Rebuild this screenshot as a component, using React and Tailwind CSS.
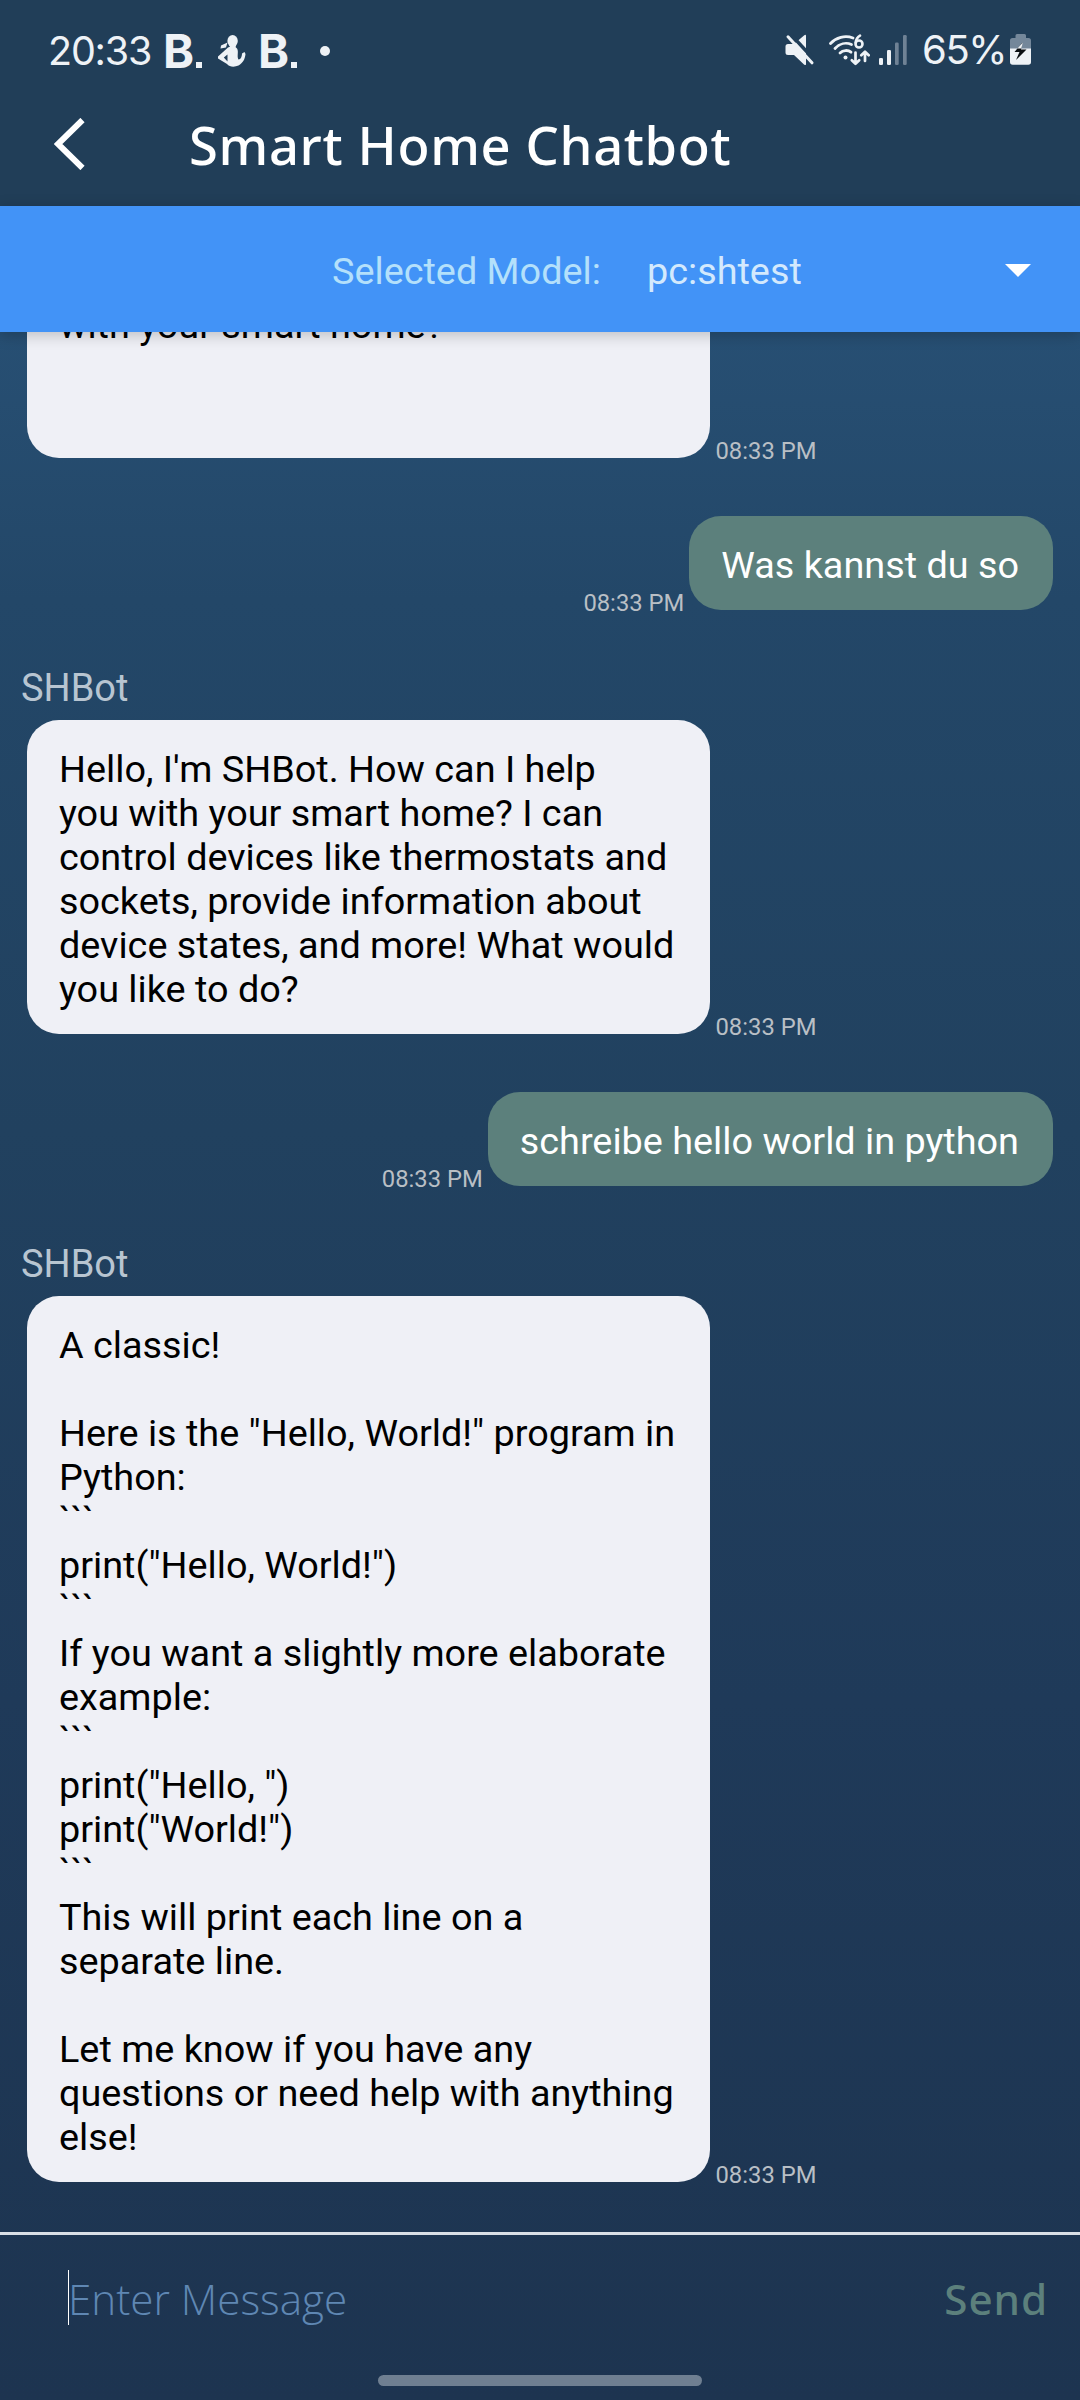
import React from "react";

const MESSAGES = [
  { from: "bot", continued: true, time: "08:33 PM", text: "with your smart home?\n\n\u00a0" },
  { from: "user", time: "08:33 PM", text: "Was kannst du so" },
  {
    from: "bot",
    time: "08:33 PM",
    text: "Hello, I'm SHBot. How can I help\nyou with your smart home? I can\ncontrol devices like thermostats and\nsockets, provide information about\ndevice states, and more! What would\nyou like to do?",
  },
  { from: "user", time: "08:33 PM", text: "schreibe hello world in python" },
  {
    from: "bot",
    time: "08:33 PM",
    text: 'A classic!\n\nHere is the "Hello, World!" program in\nPython:\n```\nprint("Hello, World!")\n```\nIf you want a slightly more elaborate\nexample:\n```\nprint("Hello, ")\nprint("World!")\n```\nThis will print each line on a\nseparate line.\n\nLet me know if you have any\nquestions or need help with anything\nelse!',
  },
];

function BoldB() {
  return (
    <span className="flex w-[36px] items-end justify-between">
      <span className="-ml-[3px] -mt-px mb-px w-[29px] font-['Inter'] text-[47px] font-bold leading-[35px] tracking-[-1px]">B</span>
      <span className="mb-px size-[6px] shrink-0 bg-[#eef2f6]" />
    </span>
  );
}

function FigureIcon() {
  return (
    <svg className="h-[32px] w-[28px]" viewBox="0 0 28 32" fill="#eef2f6">
      <ellipse cx="14.6" cy="6" rx="5.2" ry="6" />
      <path d="M12 10h6l-.5 3-6 .5z" />
      <path d="M9.5 7.5 3 10.5 2.5 13.5 8 12.5z" />
      <path d="M10 12.5c3-1.5 7-1.2 9 1 2 3-.5 8 1.5 11 2.5 0 3.500-3.500 3.500-6l2.500-1.500 1 2c-.5 5-2.500 9-7 11.500-4 1.800-9 1.600-11.500-1.500L0 23.500v-2z" />
      <path d="M9.500 19.500 5.800 22.500 9.500 26.500z" fill="#213e58" />
    </svg>
  );
}

function MuteIcon() {
  return (
    <svg className="h-[31px] w-[30px]" viewBox="0 0 30 31">
      <path d="M3 10h6l10-8.500q2-1.500 2 .5v28q0 2-2 .5L9 21H3q-2.500 0-2.500-2.500v-6Q.5 10 3 10z" fill="#eef2f6" />
      <path d="M5.500 0 29.500 26" stroke="#213e58" strokeWidth="3.500" />
      <path d="M3 2.800 27 28.800" stroke="#eef2f6" strokeWidth="3" strokeLinecap="round" />
    </svg>
  );
}

function WifiIcon() {
  return (
    <svg className="h-[32px] w-[41px]" viewBox="0 0 41 32" fill="none" stroke="#eef2f6" strokeLinecap="round">
      <g strokeWidth="2.800">
        <path d="M1.500 9.500C7 3.500 16 1 24 4" />
        <path d="M6 14.500C10.500 9.500 17 8.200 22.500 10.500" />
        <path d="M11 19c3-3 8-3.300 11-.8" />
      </g>
      <circle cx="16.500" cy="23.500" r="2" fill="#eef2f6" stroke="none" />
      <g strokeWidth="2.600">
        <circle cx="30" cy="10" r="3.500" />
        <path d="M26.700 8.500C27 5.500 28.500 3 31 1.600" />
      </g>
      <g strokeWidth="2.700" strokeLinejoin="round">
        <path d="M26.500 18.500V29.500M22.800 26.200l3.700 3.600 3.700-3.600" />
        <path d="M36 27V18M32.300 21.200l3.700-3.600 3.700 3.600" />
      </g>
    </svg>
  );
}

function SignalIcon() {
  return (
    <svg className="h-[30px] w-[28px]" viewBox="0 0 28 30">
      <rect x="0" y="23" width="4" height="7" rx="1.300" fill="#eef2f6" />
      <rect x="8" y="15" width="4" height="15" rx="1.300" fill="#eef2f6" />
      <rect x="16" y="7.500" width="3.700" height="22.500" rx="1.300" fill="#6f8295" />
      <rect x="24" y="0" width="3.700" height="30" rx="1.300" fill="#6f8295" />
    </svg>
  );
}

function BatteryIcon() {
  return (
    <svg className="h-[31px] w-[21px]" viewBox="0 0 21 31">
      <path d="M5.500 1.500Q5.500 0 7 0h7.500Q16 0 16 1.500V4h2.500Q21 4 21 6.500V15H0V6.500Q0 4 2.500 4h3z" fill="#74879a" />
      <path d="M0 14.500h21V28q0 2.700-2.700 2.700H2.700Q0 30.700 0 28z" fill="#eef2f6" />
      <path d="M12.500 8.500 4.500 18h5l-3.500 8L16.500 15.500H11z" fill="#0b0f13" />
      <path d="M12.800 8.500 7.300 14.500h4z" fill="#eef2f6" />
    </svg>
  );
}

function StatusBar() {
  return (
    <div className="flex h-[100px] justify-between pl-[48px] pr-[49px] pt-[33px] text-[#eef2f6]">
      <div className="flex h-[36px] items-center">
        <span className="w-[118px] font-['Inter'] text-[39.5px] font-normal leading-[36px] tracking-[-1.2px]">20:33</span>
        <BoldB />
        <span className="ml-[16px] mr-[15px] flex"><FigureIcon /></span>
        <BoldB />
        <span className="ml-[23px] size-[10px] rounded-full bg-[#eef2f6]" />
      </div>
      <div className="flex h-[33px] items-center">
        <MuteIcon />
        <span className="ml-[14px] flex"><WifiIcon /></span>
        <span className="ml-[9px] flex"><SignalIcon /></span>
        <span className="ml-[15px] w-[88px] whitespace-nowrap font-['Inter'] text-[40px] font-normal leading-[36px] tracking-[-1.4px]">65%</span>
        <BatteryIcon />
      </div>
    </div>
  );
}

function Header() {
  return (
    <header className="h-[206px] shrink-0 bg-[#213e58]">
      <StatusBar />
      <div className="flex items-start pl-[54px] pt-[9px]">
        <svg className="mt-[9px] h-[52px] w-[31px]" viewBox="0 0 31 52" fill="none" stroke="#fff" strokeWidth="6">
          <path d="M28.500 2 4 26 28.500 50" />
        </svg>
        <h1 className="ml-[104px] font-['Noto_Sans'] text-[52.500px] font-medium leading-[72px] tracking-[0.65px] text-white">
          Smart Home Chatbot
        </h1>
      </div>
    </header>
  );
}

function ModelBar() {
  return (
    <div className="relative z-10 flex h-[126px] shrink-0 items-center bg-[#4293f7] pl-[332px] pr-[49px] pt-[4px] leading-[44px] shadow-[0_3px_14px_rgba(0,0,0,0.22)]">
      <span className="w-[315px] text-[#b4e0fb]">Selected Model:</span>
      <span className="grow text-[#d3e9fd]">pc:shtest</span>
      <svg className="-mt-[2px] h-[13px] w-[26px]" viewBox="0 0 26 13">
        <path d="M0 0h26L13 13z" fill="#fff" />
      </svg>
    </div>
  );
}

function Message({ from, text, time, continued }) {
  if (from === "user") {
    return (
      <div className="mt-[58px] flex shrink-0 items-end justify-end pr-[27px]">
        <time className="-mb-[7px] mr-[5px] text-[23.800px] leading-[28px] text-[#b9bfc5]">{time}</time>
        <div className="rounded-[32px] bg-[#5c807c] pb-[23px] pl-[32px] pr-[34px] pt-[27px] text-white">{text}</div>
      </div>
    );
  }
  return (
    <div className="mt-[56px] flex shrink-0 flex-col gap-[10px]">
      {!continued && <div className="pl-[21px] text-[38px] text-[#b8c5d1]">SHBot</div>}
      <div className="flex items-end pl-[27px]">
        <div className="w-[683px] whitespace-pre rounded-[32px] bg-[#eff0f6] pb-[23px] pl-[32px] pt-[27px] text-black">
          {text}
        </div>
        <time className="-mb-[7px] ml-[5.500px] text-[23.800px] leading-[28px] text-[#b9bfc5]">{time}</time>
      </div>
    </div>
  );
}

function Composer() {
  return (
    <footer className="flex h-[168px] shrink-0 flex-col items-center border-t-[3px] border-[#d9dfe6]">
      <div className="flex h-[140px] w-full items-start justify-between pl-[68px] pr-[32px] pt-[35px]">
        <div className="flex h-[55px] border-l border-white font-['Open_Sans'] text-[42.200px] font-light leading-[55px] text-[#5f87b3]">
          <span className="-ml-px pt-px">Enter Message</span>
        </div>
        <button className="pt-px font-['Noto_Sans'] text-[42.200px] font-medium leading-[55px] tracking-[0.9px] text-[#5c807c]">
          Send
        </button>
      </div>
      <div className="h-[11px] w-[324px] rounded-full bg-[#6f7f91]" />
    </footer>
  );
}

export default function App() {
  return (
    <div className="flex h-[2400px] w-[1080px] flex-col overflow-hidden bg-[linear-gradient(to_bottom,#274f73_332px,#234768_600px,#21415f_1130px,#1f3a59_1700px,#1d3450_2400px)] font-['Roboto',sans-serif] text-[37.800px] leading-[44px]">
      <Header />
      <ModelBar />
      <main className="flex min-h-0 grow flex-col justify-end overflow-hidden pb-[50px]">
        {MESSAGES.map((message, i) => (
          <Message key={i} {...message} />
        ))}
      </main>
      <Composer />
    </div>
  );
}
